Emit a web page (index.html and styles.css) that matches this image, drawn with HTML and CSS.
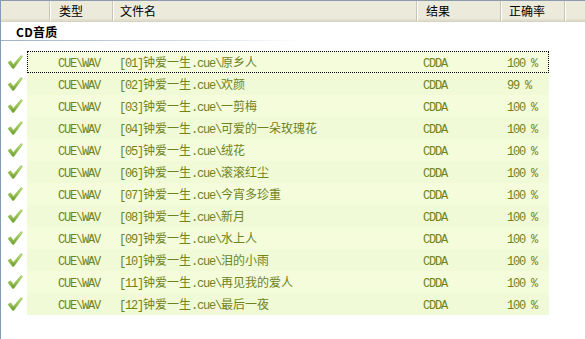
FILE: index.html
```html
<!DOCTYPE html>
<html lang="zh-CN">
<head>
    <meta charset="UTF-8">
    <title>CD音质</title>
    <link rel="stylesheet" href="styles.css">
</head>
<body>
    <svg width="0" height="0" class="defs">
        <defs>
            <linearGradient id="tick" x1="0" y1="0" x2="0" y2="1">
                <stop offset="0" stop-color="#c4e47c"/>
                <stop offset="1" stop-color="#6a9c2a"/>
            </linearGradient>
            <symbol id="ok" viewBox="0 0 16 16">
                <path d="M1 8.5 L3.6 6.8 L6.4 10.4 L14 1.5 L15.4 2.6 L6.8 14.6 L5.6 14.6 Z" fill="url(#tick)" stroke="#8cb848" stroke-width="0.6" stroke-linejoin="round"/>
            </symbol>
        </defs>
    </svg>

    <div class="list">
        <div class="head">
            <div class="col c0"></div>
            <div class="col c1">类型</div>
            <div class="col c2">文件名</div>
            <div class="col c3">结果</div>
            <div class="col c4">正确率</div>
            <div class="col c5"></div>
        </div>

        <div class="group"><b>CD音质</b></div>

        <div class="rows">
            <div class="row focus">
                <svg class="ico"><use href="#ok"/></svg>
                <div class="cells"><span class="type m">CUE\WAV</span><span class="file"><span class="m">[01]</span>钟爱一生<span class="m">.cue\</span>原乡人</span><span class="res m">CDDA</span><span class="acc m">100 %</span></div>
            </div>
            <div class="row">
                <svg class="ico"><use href="#ok"/></svg>
                <div class="cells"><span class="type m">CUE\WAV</span><span class="file"><span class="m">[02]</span>钟爱一生<span class="m">.cue\</span>欢颜</span><span class="res m">CDDA</span><span class="acc m">99 %</span></div>
            </div>
            <div class="row">
                <svg class="ico"><use href="#ok"/></svg>
                <div class="cells"><span class="type m">CUE\WAV</span><span class="file"><span class="m">[03]</span>钟爱一生<span class="m">.cue\</span>一剪梅</span><span class="res m">CDDA</span><span class="acc m">100 %</span></div>
            </div>
            <div class="row">
                <svg class="ico"><use href="#ok"/></svg>
                <div class="cells"><span class="type m">CUE\WAV</span><span class="file"><span class="m">[04]</span>钟爱一生<span class="m">.cue\</span>可爱的一朵玫瑰花</span><span class="res m">CDDA</span><span class="acc m">100 %</span></div>
            </div>
            <div class="row">
                <svg class="ico"><use href="#ok"/></svg>
                <div class="cells"><span class="type m">CUE\WAV</span><span class="file"><span class="m">[05]</span>钟爱一生<span class="m">.cue\</span>绒花</span><span class="res m">CDDA</span><span class="acc m">100 %</span></div>
            </div>
            <div class="row">
                <svg class="ico"><use href="#ok"/></svg>
                <div class="cells"><span class="type m">CUE\WAV</span><span class="file"><span class="m">[06]</span>钟爱一生<span class="m">.cue\</span>滚滚红尘</span><span class="res m">CDDA</span><span class="acc m">100 %</span></div>
            </div>
            <div class="row">
                <svg class="ico"><use href="#ok"/></svg>
                <div class="cells"><span class="type m">CUE\WAV</span><span class="file"><span class="m">[07]</span>钟爱一生<span class="m">.cue\</span>今宵多珍重</span><span class="res m">CDDA</span><span class="acc m">100 %</span></div>
            </div>
            <div class="row">
                <svg class="ico"><use href="#ok"/></svg>
                <div class="cells"><span class="type m">CUE\WAV</span><span class="file"><span class="m">[08]</span>钟爱一生<span class="m">.cue\</span>新月</span><span class="res m">CDDA</span><span class="acc m">100 %</span></div>
            </div>
            <div class="row">
                <svg class="ico"><use href="#ok"/></svg>
                <div class="cells"><span class="type m">CUE\WAV</span><span class="file"><span class="m">[09]</span>钟爱一生<span class="m">.cue\</span>水上人</span><span class="res m">CDDA</span><span class="acc m">100 %</span></div>
            </div>
            <div class="row">
                <svg class="ico"><use href="#ok"/></svg>
                <div class="cells"><span class="type m">CUE\WAV</span><span class="file"><span class="m">[10]</span>钟爱一生<span class="m">.cue\</span>泪的小雨</span><span class="res m">CDDA</span><span class="acc m">100 %</span></div>
            </div>
            <div class="row">
                <svg class="ico"><use href="#ok"/></svg>
                <div class="cells"><span class="type m">CUE\WAV</span><span class="file"><span class="m">[11]</span>钟爱一生<span class="m">.cue\</span>再见我的爱人</span><span class="res m">CDDA</span><span class="acc m">100 %</span></div>
            </div>
            <div class="row">
                <svg class="ico"><use href="#ok"/></svg>
                <div class="cells"><span class="type m">CUE\WAV</span><span class="file"><span class="m">[12]</span>钟爱一生<span class="m">.cue\</span>最后一夜</span><span class="res m">CDDA</span><span class="acc m">100 %</span></div>
            </div>
        </div>
    </div>
</body>
</html>
```

FILE: styles.css
```css
body {
    margin: 0;
    background: #fff;
    font-family: "Noto Sans CJK SC", sans-serif;
    font-size: 12px;
}
.defs {
    position: absolute;
}
.list {
    height: 339px;
    border-left: 1px solid #7f9db9;
    border-top: 1px solid #8c9aae;
    box-sizing: border-box;
}

/* column header */
.head {
    display: flex;
    height: 20px;
    background: #ebeadb;
    border-bottom: 1px solid #d6d2c2;
    box-shadow: inset 0 -2px 0 #e2decd;
}
.col {
    box-sizing: border-box;
    padding-left: 8px;
    line-height: 19px;
    color: #000;
    border-right: 1px solid #c7c5b2;
    box-shadow: 1px 0 0 #fff;
}
.c0 { width: 49px; }
.c1 { width: 63px; padding-left: 9px; }
.c2 { width: 304px; padding-left: 7px; }
.c3 { width: 84px; padding-left: 9px; }
.c4 { width: 64px; }
.c5 { flex: 1; border-right: none; box-shadow: none; }

/* group title with fading rule */
.group {
    height: 19px;
    padding: 1px 0 0 15px;
    line-height: 17px;
}
.group b {
    font-weight: 700;
    letter-spacing: 0.3px;
}
.group::after {
    content: "";
    display: block;
    width: 300px;
    height: 1px;
    margin-left: -15px;
    background: linear-gradient(to right, #9fb2c8, #d9e2ec 70%, #fff);
}

.rows {
    padding-top: 9px;
}
.row {
    display: flex;
    align-items: center;
    height: 22px;
}
.ico {
    width: 16px;
    height: 16px;
    margin: 0 4px 0 6px;
}
.cells {
    display: flex;
    width: 522px;
    height: 22px;
    box-sizing: border-box;
    align-items: baseline;
    line-height: 21px;
    background: #f4fcdc;
    color: #6f831c;
}
.row:nth-child(even) .cells {
    background: #f1fad6;
}
.focus .cells {
    outline: 1px dotted #000;
    outline-offset: -1px;
}
.m {
    font-family: "Liberation Mono", monospace;
    font-size: 12px;
    letter-spacing: -1.2px;
}
.type { width: 92px; padding-left: 31px; box-sizing: border-box; }
.file { width: 304px; box-sizing: border-box; }
.res { width: 84px; box-sizing: border-box; }
.acc { width: 42px; box-sizing: border-box; }
```
